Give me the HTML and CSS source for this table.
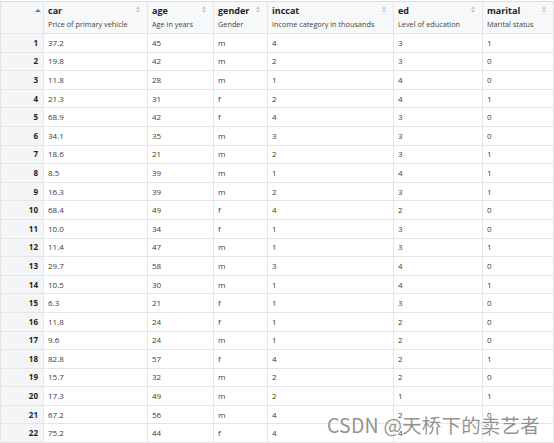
FILE: index.html
```html
<!DOCTYPE html>
<html>
<head>
<meta charset="utf-8">
<link rel="stylesheet" href="styles.css">
</head>
<body>
<div class="viewer">
<table class="grid">
<colgroup>
<col class="c-idx"><col class="c-car"><col class="c-age"><col class="c-gender"><col class="c-inccat"><col class="c-ed"><col class="c-marital">
</colgroup>
<thead>
<tr>
<th class="idx-head"><span class="sort-up"></span></th>
<th><div class="name">car</div><div class="label">Price of primary vehicle</div><span class="sorter"></span></th>
<th><div class="name">age</div><div class="label">Age in years</div><span class="sorter"></span></th>
<th><div class="name">gender</div><div class="label">Gender</div><span class="sorter"></span></th>
<th><div class="name">inccat</div><div class="label">Income category in thousands</div><span class="sorter"></span></th>
<th><div class="name">ed</div><div class="label">Level of education</div><span class="sorter"></span></th>
<th><div class="name">marital</div><div class="label">Marital status</div><span class="sorter"></span></th>
</tr>
</thead>
<tbody id="rows">
<tr><td class="idx">1</td><td>37.2</td><td>45</td><td>m</td><td>4</td><td>3</td><td>1</td></tr>
<tr><td class="idx">2</td><td>19.8</td><td>42</td><td>m</td><td>2</td><td>3</td><td>0</td></tr>
<tr><td class="idx">3</td><td>11.8</td><td>28</td><td>m</td><td>1</td><td>4</td><td>0</td></tr>
<tr><td class="idx">4</td><td>21.3</td><td>31</td><td>f</td><td>2</td><td>4</td><td>1</td></tr>
<tr><td class="idx">5</td><td>68.9</td><td>42</td><td>f</td><td>4</td><td>3</td><td>0</td></tr>
<tr><td class="idx">6</td><td>34.1</td><td>35</td><td>m</td><td>3</td><td>3</td><td>0</td></tr>
<tr><td class="idx">7</td><td>18.6</td><td>21</td><td>m</td><td>2</td><td>3</td><td>1</td></tr>
<tr><td class="idx">8</td><td>8.5</td><td>39</td><td>m</td><td>1</td><td>4</td><td>1</td></tr>
<tr><td class="idx">9</td><td>16.3</td><td>39</td><td>m</td><td>2</td><td>3</td><td>1</td></tr>
<tr><td class="idx">10</td><td>68.4</td><td>49</td><td>f</td><td>4</td><td>2</td><td>0</td></tr>
<tr><td class="idx">11</td><td>10.0</td><td>34</td><td>f</td><td>1</td><td>3</td><td>0</td></tr>
<tr><td class="idx">12</td><td>11.4</td><td>47</td><td>m</td><td>1</td><td>3</td><td>1</td></tr>
<tr><td class="idx">13</td><td>29.7</td><td>58</td><td>m</td><td>3</td><td>4</td><td>0</td></tr>
<tr><td class="idx">14</td><td>10.5</td><td>30</td><td>m</td><td>1</td><td>4</td><td>1</td></tr>
<tr><td class="idx">15</td><td>6.3</td><td>21</td><td>f</td><td>1</td><td>3</td><td>0</td></tr>
<tr><td class="idx">16</td><td>11.8</td><td>24</td><td>f</td><td>1</td><td>2</td><td>0</td></tr>
<tr><td class="idx">17</td><td>9.6</td><td>24</td><td>m</td><td>1</td><td>2</td><td>0</td></tr>
<tr><td class="idx">18</td><td>82.8</td><td>57</td><td>f</td><td>4</td><td>2</td><td>1</td></tr>
<tr><td class="idx">19</td><td>15.7</td><td>32</td><td>m</td><td>2</td><td>2</td><td>0</td></tr>
<tr><td class="idx">20</td><td>17.3</td><td>49</td><td>m</td><td>2</td><td>1</td><td>1</td></tr>
<tr><td class="idx">21</td><td>67.2</td><td>56</td><td>m</td><td>4</td><td>2</td><td>0</td></tr>
<tr><td class="idx">22</td><td>75.2</td><td>44</td><td>f</td><td>4</td><td>4</td><td>1</td></tr>
</tbody>
</table>
<div class="watermark">CSDN @天桥下的卖艺者</div>
</div>
</body>
</html>
```
FILE: styles.css
```css
html, body {
  margin: 0;
  padding: 0;
  background: #ffffff;
}
.viewer {
  position: relative;
  width: 554px;
  height: 443px;
  overflow: hidden;
  font-family: "Open Sans", "Noto Sans", sans-serif;
}
.grid {
  border-collapse: collapse;
  table-layout: fixed;
  width: 553px;
  margin-top: 1px;
}
.c-idx { width: 43px; }
.c-car { width: 104px; }
.c-age { width: 66px; }
.c-gender { width: 54px; }
.c-inccat { width: 126px; }
.c-ed { width: 89px; }
.c-marital { width: 71px; }

.grid th {
  position: relative;
  box-sizing: border-box;
  height: 32px;
  background: #f7f8f9;
  border: 1px solid #e2e4e6;
  border-top-color: #dcdde0;
  text-align: left;
  vertical-align: top;
  padding: 3px 4px 0 4px;
  font-weight: normal;
}
.grid th.idx-head {
  background: #f6f7f8;
}
.name {
  font-size: 9px;
  font-weight: bold;
  color: #1e1e1e;
  line-height: 12px;
}
.label {
  font-size: 7.3px;
  color: #444;
  line-height: 12px;
  margin-top: 1px;
  white-space: nowrap;
}
.sorter {
  position: absolute;
  right: 6px;
  top: 4px;
  width: 5px;
  height: 8px;
}
.sorter::before, .sorter::after {
  content: "";
  position: absolute;
  left: 0;
  border-left: 2.5px solid transparent;
  border-right: 2.5px solid transparent;
}
.sorter::before {
  top: 0;
  border-bottom: 3px solid #c8cacd;
}
.sorter::after {
  top: 4px;
  border-top: 3px solid #c8cacd;
}
.sort-up {
  position: absolute;
  left: 34px;
  top: 7px;
  border-left: 3px solid transparent;
  border-right: 3px solid transparent;
  border-bottom: 3.5px solid #3a86d4;
}
.grid td {
  box-sizing: border-box;
  height: 18.6px;
  padding: 0 4px;
  border: 1px solid #e3e5e7;
  font-size: 8px;
  color: #3a3a3a;
  white-space: nowrap;
  line-height: 10px;
}
.grid td.idx {
  background: #f3f5f7;
  text-align: right;
  font-weight: bold;
  color: #1e1e1e;
  padding-right: 5px;
}
.watermark {
  position: absolute;
  left: 327px;
  top: 410px;
  font-family: "Noto Sans CJK SC", "Noto Sans", sans-serif;
  font-size: 19.5px;
  color: rgba(125, 125, 125, 0.85);
  white-space: nowrap;
  letter-spacing: 0.2px;
  text-shadow: 0 0 2px #fff, 0 0 2px #fff;
}
```
